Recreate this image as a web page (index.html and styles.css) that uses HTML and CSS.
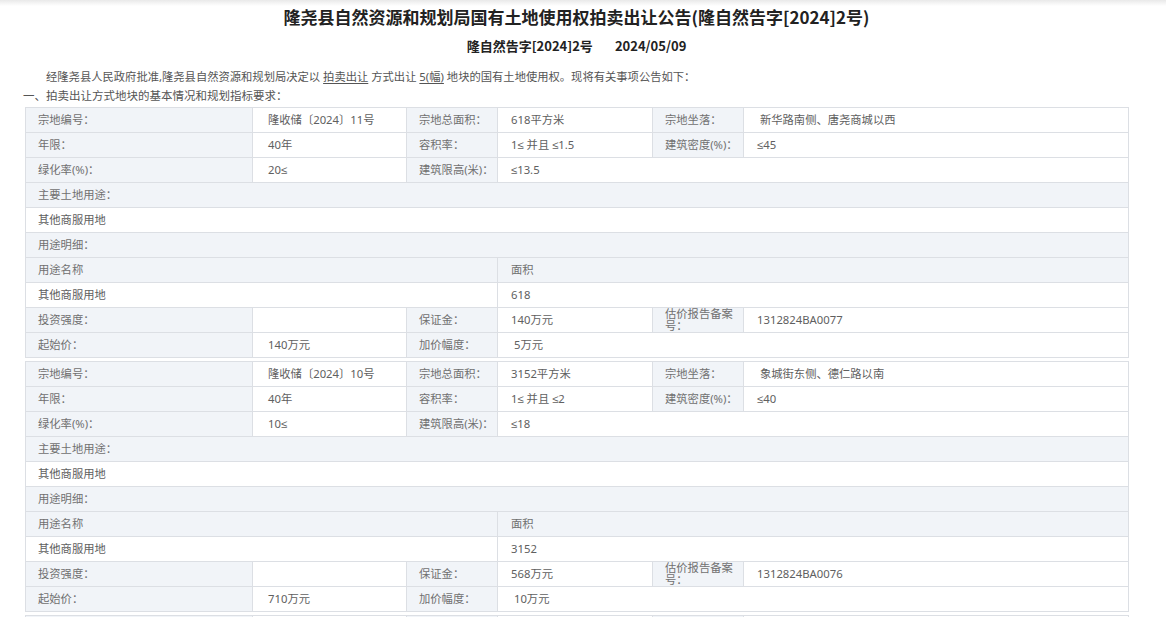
FILE: index.html
```html
<!DOCTYPE html>
<html lang="zh-CN">
<head>
<meta charset="utf-8">
<title>隆尧县自然资源和规划局国有土地使用权拍卖出让公告</title>
<link rel="stylesheet" href="styles.css">
</head>
<body>
<div class="page">
  <h1 class="title">隆尧县自然资源和规划局国有土地使用权拍卖出让公告(隆自然告字[2024]2号)</h1>
  <div class="sub"><span>隆自然告字[2024]2号</span><span class="date">2024/05/09</span></div>
  <p class="intro">经隆尧县人民政府批准,隆尧县自然资源和规划局决定以 <u>拍卖出让</u> 方式出让 <u>5(幅)</u> 地块的国有土地使用权。现将有关事项公告如下：</p>
  <p class="section">一、拍卖出让方式地块的基本情况和规划指标要求：</p>

  <table class="land">
    <colgroup><col class="c1"><col class="c2"><col class="c3"><col class="c4"><col class="c5"><col class="c6"></colgroup>
    <tr><td class="l">宗地编号：</td><td class="v v2">隆收储〔2024〕11号</td><td class="l">宗地总面积：</td><td class="v">618平方米</td><td class="l">宗地坐落：</td><td class="v">&nbsp;新华路南侧、唐尧商城以西</td></tr>
    <tr><td class="l">年限：</td><td class="v v2">40年</td><td class="l">容积率：</td><td class="v">1≤ 并且 ≤1.5</td><td class="l">建筑密度(%)：</td><td class="v">≤45</td></tr>
    <tr><td class="l">绿化率(%)：</td><td class="v v2">20≤</td><td class="l">建筑限高(米)：</td><td class="v" colspan="3">≤13.5</td></tr>
    <tr><td class="l" colspan="6">主要土地用途：</td></tr>
    <tr><td class="v v1" colspan="6">其他商服用地</td></tr>
    <tr><td class="l" colspan="6">用途明细：</td></tr>
    <tr><td class="l" colspan="3">用途名称</td><td class="l l4" colspan="3">面积</td></tr>
    <tr><td class="v v1" colspan="3">其他商服用地</td><td class="v" colspan="3">618</td></tr>
    <tr><td class="l">投资强度：</td><td class="v v2"></td><td class="l">保证金：</td><td class="v">140万元</td><td class="l wrap">估价报告备案号：</td><td class="v">1312824BA0077</td></tr>
    <tr><td class="l">起始价：</td><td class="v v2">140万元</td><td class="l">加价幅度：</td><td class="v" colspan="3">&nbsp;5万元</td></tr>
  </table>

  <table class="land">
    <colgroup><col class="c1"><col class="c2"><col class="c3"><col class="c4"><col class="c5"><col class="c6"></colgroup>
    <tr><td class="l">宗地编号：</td><td class="v v2">隆收储〔2024〕10号</td><td class="l">宗地总面积：</td><td class="v">3152平方米</td><td class="l">宗地坐落：</td><td class="v">&nbsp;象城街东侧、德仁路以南</td></tr>
    <tr><td class="l">年限：</td><td class="v v2">40年</td><td class="l">容积率：</td><td class="v">1≤ 并且 ≤2</td><td class="l">建筑密度(%)：</td><td class="v">≤40</td></tr>
    <tr><td class="l">绿化率(%)：</td><td class="v v2">10≤</td><td class="l">建筑限高(米)：</td><td class="v" colspan="3">≤18</td></tr>
    <tr><td class="l" colspan="6">主要土地用途：</td></tr>
    <tr><td class="v v1" colspan="6">其他商服用地</td></tr>
    <tr><td class="l" colspan="6">用途明细：</td></tr>
    <tr><td class="l" colspan="3">用途名称</td><td class="l l4" colspan="3">面积</td></tr>
    <tr><td class="v v1" colspan="3">其他商服用地</td><td class="v" colspan="3">3152</td></tr>
    <tr><td class="l">投资强度：</td><td class="v v2"></td><td class="l">保证金：</td><td class="v">568万元</td><td class="l wrap">估价报告备案号：</td><td class="v">1312824BA0076</td></tr>
    <tr><td class="l">起始价：</td><td class="v v2">710万元</td><td class="l">加价幅度：</td><td class="v" colspan="3">&nbsp;10万元</td></tr>
  </table>

  <table class="land">
    <colgroup><col class="c1"><col class="c2"><col class="c3"><col class="c4"><col class="c5"><col class="c6"></colgroup>
    <tr><td class="l"></td><td class="v v2"></td><td class="l"></td><td class="v"></td><td class="l"></td><td class="v"></td></tr>
  </table>
</div>
</body>
</html>
```
FILE: styles.css
```css
html, body {
  margin: 0;
  padding: 0;
}

body {
  font-family: "Noto Sans CJK SC", "Microsoft YaHei", sans-serif;
  color: #555;
  background: linear-gradient(#e9e9e9, #ffffff 6px) no-repeat, #fff;
}

.page {
  padding: 0 36px 0 23px;
}

.title {
  margin: 5px 0 0;
  font-size: 17px;
  line-height: 24px;
  font-weight: bold;
  color: #222;
  text-align: center;
}

.sub {
  margin-top: 7px;
  font-size: 13px;
  line-height: 20px;
  font-weight: bold;
  color: #222;
  text-align: center;
}

.sub .date {
  margin-left: 22px;
}

.intro {
  margin: 12px 0 0;
  font-family: "Noto Sans", "Liberation Sans", "Noto Sans CJK SC", sans-serif;
  font-size: 11.3px;
  line-height: 18px;
  text-indent: 23px;
  color: #555;
}

.intro u {
  text-underline-offset: 2px;
}

.section {
  margin: 1px 0 0;
  font-family: "Noto Sans", "Liberation Sans", "Noto Sans CJK SC", sans-serif;
  font-size: 11.5px;
  line-height: 18px;
  color: #555;
}

.land {
  width: 1103px;
  margin: 2px 0 0 2px;
  border-collapse: collapse;
  table-layout: fixed;
  font-family: "Noto Sans", "Liberation Sans", "Noto Sans CJK SC", sans-serif;
  font-size: 11.3px;
}

.land + .land {
  margin-top: 3px;
}

.c1 { width: 227px; }
.c2 { width: 154px; }
.c3 { width: 91px; }
.c4 { width: 155px; }
.c5 { width: 91px; }
.c6 { width: 385px; }

.land td {
  border: 1px solid #dcdfe4;
  height: 25px;
  padding: 0 0 0 13px;
  line-height: 14px;
  white-space: nowrap;
  overflow: hidden;
  vertical-align: middle;
  box-sizing: border-box;
}

.land td.l {
  background: #f1f4f8;
  color: #707070;
  padding-left: 12px;
}

.land td.l4 {
  padding-left: 13px;
}

.land td.v {
  background: #fff;
  color: #606060;
}

.land td.v1 {
  padding-left: 12px;
}

.land td.v2 {
  padding-left: 15px;
}

.land td.wrap {
  white-space: normal;
  line-height: 12px;
  padding-right: 4px;
}
```
